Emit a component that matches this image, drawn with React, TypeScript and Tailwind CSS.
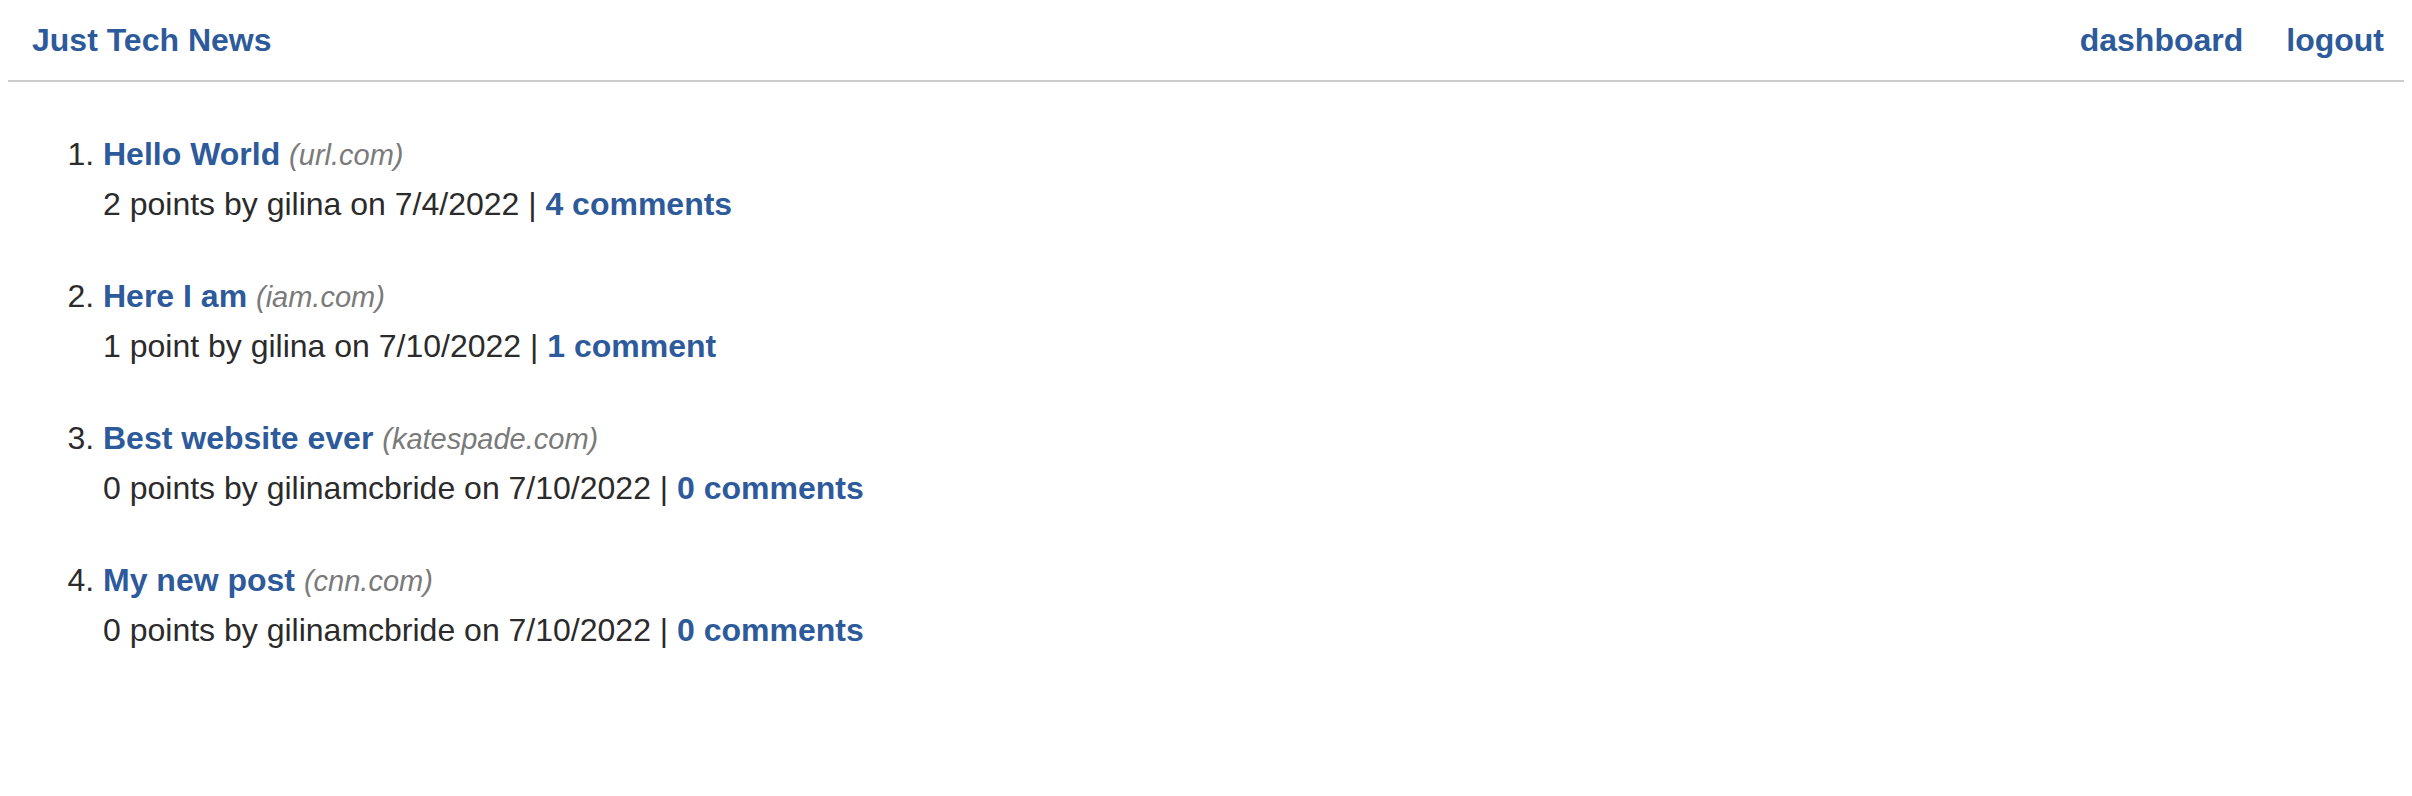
import React from "react";

type Post = {
    id: number;
    title: string;
    url: string;
    points: number;
    user: string;
    date: string;
    comments: number;
};

const posts: Post[] = [
    { id: 1, title: "Hello World", url: "url.com", points: 2, user: "gilina", date: "7/4/2022", comments: 4 },
    { id: 2, title: "Here I am", url: "iam.com", points: 1, user: "gilina", date: "7/10/2022", comments: 1 },
    { id: 3, title: "Best website ever", url: "katespade.com", points: 0, user: "gilinamcbride", date: "7/10/2022", comments: 0 },
    { id: 4, title: "My new post", url: "cnn.com", points: 0, user: "gilinamcbride", date: "7/10/2022", comments: 0 },
];

function plural(n: number, word: string) {
    return `${n} ${word}${n === 1 ? "" : "s"}`;
}

export default function App() {
    return (
        <div className="min-h-screen bg-white px-2 font-['Liberation_Sans',Arial,sans-serif] text-[32px] text-[#2b2b2b]">
            <header className="flex h-[82px] items-center justify-between border-b-2 border-[#cccccc] pl-6 pr-5 font-bold text-[#2d5a9b]">
                <a href="#">Just Tech News</a>
                <nav className="flex gap-[43px]">
                    <a href="#">dashboard</a>
                    <a href="#">logout</a>
                </nav>
            </header>

            <ol className="mt-[47px] list-decimal pl-[95px]">
                {posts.map((post) => (
                    <li key={post.id} className="mb-[42px] leading-[50px]">
                        <div>
                            <a href="#" className="font-bold text-[#2d5a9b]">{post.title}</a>{" "}
                            <span className="text-[29px] leading-none italic text-[#7a7a7a]">({post.url})</span>
                        </div>
                        <div>
                            {plural(post.points, "point")} by {post.user} on {post.date} |{" "}
                            <a href="#" className="font-bold text-[#2d5a9b]">{plural(post.comments, "comment")}</a>
                        </div>
                    </li>
                ))}
            </ol>
        </div>
    );
}
